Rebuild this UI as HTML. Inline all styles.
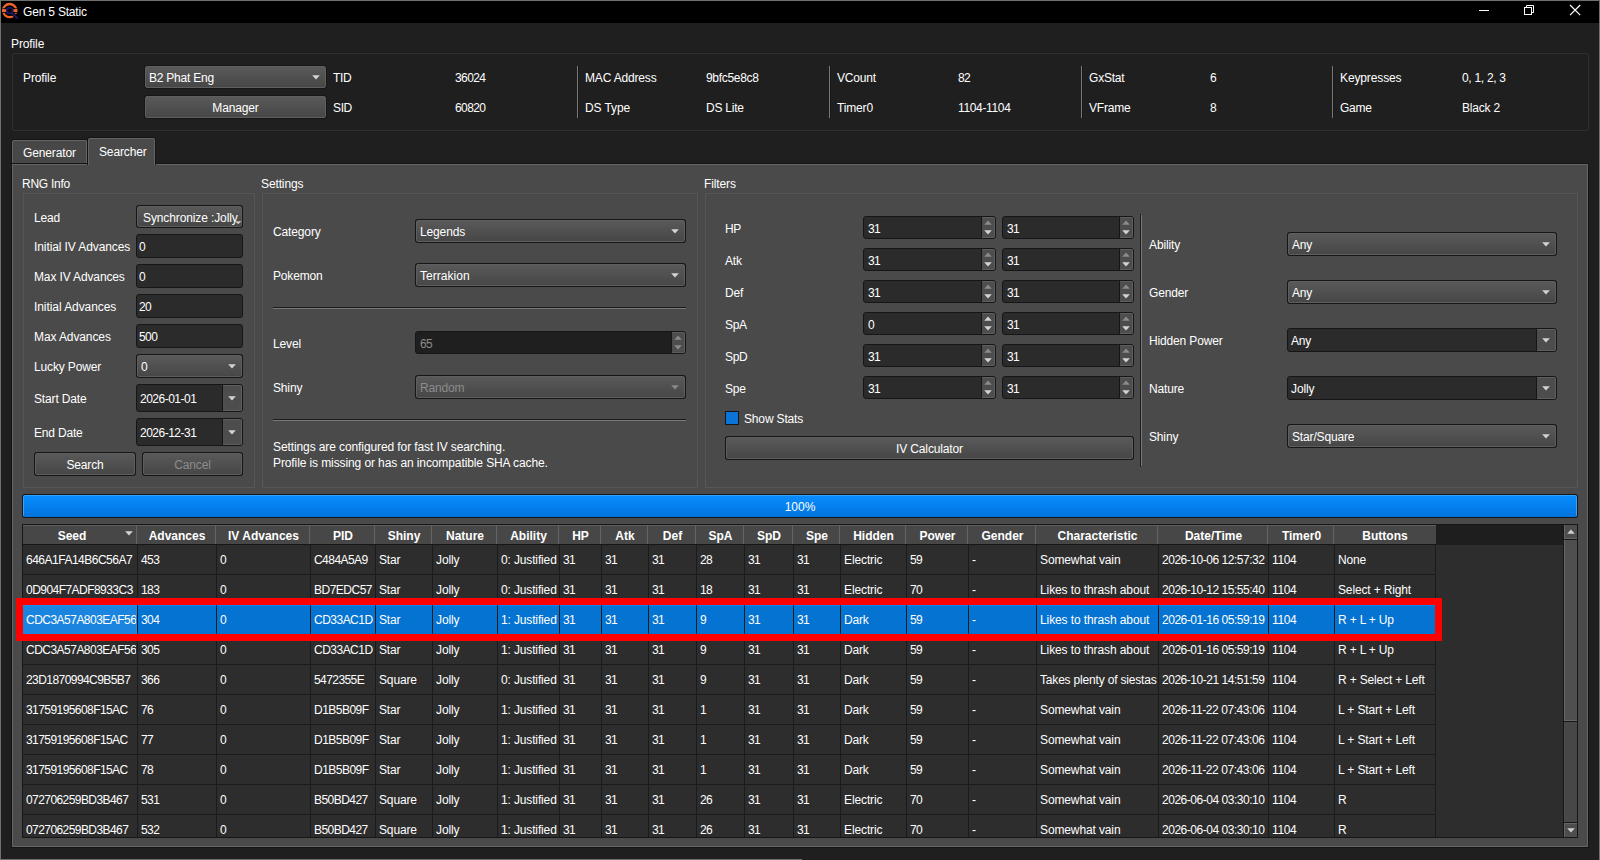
<!DOCTYPE html><html><head><meta charset="utf-8"><style>
html,body{margin:0;padding:0;width:1600px;height:860px;overflow:hidden;background:#1f1f1f}
.a{position:absolute} .t{position:absolute;font-family:"Liberation Sans", sans-serif;font-size:12px;line-height:13px;color:#fff;white-space:nowrap} .dis{color:#8c8c8c} .b{font-weight:bold}
</style></head><body>
<div class="a" style="left:0px;top:0px;width:1600px;height:860px;background:#6f6f6f"></div>
<div class="a" style="left:1px;top:1px;width:1598px;height:859px;background:#1f1f1f"></div>
<div class="a" style="left:1px;top:859px;width:801px;height:1px;background:#6f6f6f"></div>
<div class="a" style="left:1px;top:1px;width:1598px;height:22px;background:#000"></div>
<svg class="a" style="left:0px;top:0px" width="24" height="24" viewBox="0 0 24 24"><circle cx="9.65" cy="10.6" r="6.6" stroke="#f0622c" stroke-width="2.3" fill="none"/><rect x="1" y="8.4" width="5.6" height="0.8" fill="#000"/><rect x="12.7" y="8.4" width="5.6" height="0.8" fill="#000"/><rect x="1" y="12.0" width="5.6" height="0.8" fill="#000"/><rect x="12.7" y="12.0" width="5.6" height="0.8" fill="#000"/><rect x="2" y="9.2" width="4" height="2.8" fill="#f0622c"/><rect x="13.3" y="9.2" width="4" height="2.8" fill="#f0622c"/><path d="M11.8 12.8 L17.8 18.6" stroke="#000" stroke-width="3.4"/><circle cx="9.6" cy="10.6" r="2.9" stroke="#1e1a6b" stroke-width="1.5" fill="none"/><path d="M11.6 12.6 L17.3 18.1" stroke="#1e1a6b" stroke-width="2" stroke-linecap="round"/></svg>
<div class="t " style="left:23px;top:6px;letter-spacing:-0.189px;">Gen 5 Static</div>
<div class="a" style="left:1479px;top:10px;width:10px;height:1px;background:#fff"></div>
<svg class="a" style="left:1520px;top:4px" width="16" height="16" viewBox="0 0 16 16"><rect x="4.5" y="3.5" width="7" height="7" stroke="#fff" fill="none"/><path d="M6.5 3.5 V1.5 H13.5 V8.5 H11.5" stroke="#fff" fill="none"/></svg>
<svg class="a" style="left:1567px;top:2px" width="16" height="16" viewBox="0 0 16 16"><path d="M3 3 L13.2 13.2 M13.2 3 L3 13.2" stroke="#fff" stroke-width="1.2" fill="none"/></svg>
<div class="t " style="left:11px;top:38px;letter-spacing:-0.117px;">Profile</div>
<div class="a" style="left:12px;top:53px;width:1577px;height:78px;border:1px solid #2f2f2f;box-sizing:border-box;border-radius:2px"></div>
<div class="t " style="left:23px;top:72px;letter-spacing:-0.117px;">Profile</div>
<div class="a" style="left:144px;top:65px;width:183px;height:24px;background:#161616;border-radius:3px"></div>
<div class="a" style="left:145px;top:66px;width:181px;height:22px;background:linear-gradient(#595959,#474747);border:1px solid #5e5e5e;box-sizing:border-box;border-radius:2px"></div>
<svg class="a" style="left:311.5px;top:75px" width="8" height="5"><polygon points="0.2,0.3 7.8,0.3 4,4.6" fill="#d4d4d4"/></svg>
<div class="t " style="left:149px;top:72px;letter-spacing:-0.231px;">B2 Phat Eng</div>
<div class="a" style="left:144px;top:95px;width:183px;height:24px;background:#161616;border-radius:3px"></div>
<div class="a" style="left:145px;top:96px;width:181px;height:22px;background:linear-gradient(#595959,#474747);border:1px solid #5e5e5e;box-sizing:border-box;border-radius:2px"></div>
<div class="t " style="left:144px;width:183px;text-align:center;top:102px;letter-spacing:-0.157px;">Manager</div>
<div class="t " style="left:333px;top:72px;letter-spacing:-0.348px;">TID</div>
<div class="t " style="left:455px;top:72px;letter-spacing:-0.600px;">36024</div>
<div class="t " style="left:333px;top:102px;letter-spacing:-0.360px;">SID</div>
<div class="t " style="left:455px;top:102px;letter-spacing:-0.600px;">60820</div>
<div class="t " style="left:585px;top:72px;letter-spacing:-0.169px;">MAC Address</div>
<div class="t " style="left:706px;top:72px;letter-spacing:-0.315px;">9bfc5e8c8</div>
<div class="t " style="left:585px;top:102px;letter-spacing:-0.116px;">DS Type</div>
<div class="t " style="left:706px;top:102px;letter-spacing:-0.221px;">DS Lite</div>
<div class="a" style="left:577px;top:66px;width:1px;height:52px;background:#787878"></div>
<div class="a" style="left:578px;top:66px;width:1px;height:52px;background:#181818"></div>
<div class="t " style="left:837px;top:72px;letter-spacing:-0.208px;">VCount</div>
<div class="t " style="left:958px;top:72px;letter-spacing:-0.600px;">82</div>
<div class="t " style="left:837px;top:102px;letter-spacing:-0.151px;">Timer0</div>
<div class="t " style="left:958px;top:102px;letter-spacing:-0.349px;">1104-1104</div>
<div class="a" style="left:829px;top:66px;width:1px;height:52px;background:#787878"></div>
<div class="a" style="left:830px;top:66px;width:1px;height:52px;background:#181818"></div>
<div class="t " style="left:1089px;top:72px;letter-spacing:-0.204px;">GxStat</div>
<div class="t " style="left:1210px;top:72px;letter-spacing:-0.600px;">6</div>
<div class="t " style="left:1089px;top:102px;letter-spacing:-0.206px;">VFrame</div>
<div class="t " style="left:1210px;top:102px;letter-spacing:-0.600px;">8</div>
<div class="a" style="left:1081px;top:66px;width:1px;height:52px;background:#787878"></div>
<div class="a" style="left:1082px;top:66px;width:1px;height:52px;background:#181818"></div>
<div class="t " style="left:1340px;top:72px;letter-spacing:-0.125px;">Keypresses</div>
<div class="t " style="left:1462px;top:72px;letter-spacing:-0.300px;">0, 1, 2, 3</div>
<div class="t " style="left:1340px;top:102px;letter-spacing:-0.213px;">Game</div>
<div class="t " style="left:1462px;top:102px;letter-spacing:-0.207px;">Black 2</div>
<div class="a" style="left:1332px;top:66px;width:1px;height:52px;background:#787878"></div>
<div class="a" style="left:1333px;top:66px;width:1px;height:52px;background:#181818"></div>
<div class="a" style="left:11px;top:163px;width:1578px;height:685px;background:#141414"></div>
<div class="a" style="left:12px;top:164px;width:1576px;height:683px;background:#4a4a4a;border:1px solid #656565;box-sizing:border-box"></div>
<div class="a" style="left:11px;top:139px;width:77px;height:25px;background:#141414;border-radius:3px 3px 0 0"></div>
<div class="a" style="left:12px;top:140px;width:75px;height:23px;background:#474747;border-radius:2px 2px 0 0;border:1px solid #656565;border-bottom:none;box-sizing:border-box"></div>
<div class="t " style="left:23px;top:147px;letter-spacing:-0.130px;">Generator</div>
<div class="a" style="left:87px;top:137px;width:69px;height:28px;background:#141414;border-radius:3px 3px 0 0"></div>
<div class="a" style="left:88px;top:138px;width:67px;height:27px;background:#4a4a4a;border-radius:2px 2px 0 0;border:1px solid #656565;border-bottom:none;box-sizing:border-box"></div>
<div class="t " style="left:99px;top:146px;letter-spacing:-0.130px;">Searcher</div>
<div class="t " style="left:22px;top:178px;letter-spacing:-0.246px;">RNG Info</div>
<div class="a" style="left:23px;top:193px;width:232px;height:295px;border:1px solid #565656;box-sizing:border-box"></div>
<div class="t " style="left:261px;top:178px;letter-spacing:-0.120px;">Settings</div>
<div class="a" style="left:262px;top:193px;width:436px;height:295px;border:1px solid #565656;box-sizing:border-box"></div>
<div class="t " style="left:704px;top:178px;letter-spacing:-0.111px;">Filters</div>
<div class="a" style="left:705px;top:193px;width:873px;height:295px;border:1px solid #565656;box-sizing:border-box"></div>
<div class="t " style="left:34px;top:212px;letter-spacing:-0.165px;">Lead</div>
<div class="a" style="left:136px;top:205px;width:107px;height:23px;background:#161616;border-radius:3px"></div>
<div class="a" style="left:137px;top:206px;width:105px;height:21px;background:linear-gradient(#595959,#474747);border:1px solid #5e5e5e;box-sizing:border-box;border-radius:2px"></div>
<div class="t " style="left:143px;top:212px;letter-spacing:-0.116px;">Synchronize :Jolly</div>
<svg class="a" style="left:235px;top:221px" width="7" height="4"><polygon points="0,0.2 6.5,0.2 3.25,3.2" fill="#c8c8c8"/></svg>
<div class="t " style="left:34px;top:241px;letter-spacing:-0.095px;">Initial IV Advances</div>
<div class="a" style="left:136px;top:234px;width:107px;height:24px;background:#2b2b2b;border:1px solid #161616;box-sizing:border-box;border-radius:3px"></div>
<div class="t " style="left:139px;top:241px;letter-spacing:-0.600px;">0</div>
<div class="t " style="left:34px;top:271px;letter-spacing:-0.133px;">Max IV Advances</div>
<div class="a" style="left:136px;top:264px;width:107px;height:24px;background:#2b2b2b;border:1px solid #161616;box-sizing:border-box;border-radius:3px"></div>
<div class="t " style="left:139px;top:271px;letter-spacing:-0.600px;">0</div>
<div class="t " style="left:34px;top:301px;letter-spacing:-0.068px;">Initial Advances</div>
<div class="a" style="left:136px;top:294px;width:107px;height:24px;background:#2b2b2b;border:1px solid #161616;box-sizing:border-box;border-radius:3px"></div>
<div class="t " style="left:139px;top:301px;letter-spacing:-0.600px;">20</div>
<div class="t " style="left:34px;top:331px;letter-spacing:-0.106px;">Max Advances</div>
<div class="a" style="left:136px;top:324px;width:107px;height:24px;background:#2b2b2b;border:1px solid #161616;box-sizing:border-box;border-radius:3px"></div>
<div class="t " style="left:139px;top:331px;letter-spacing:-0.600px;">500</div>
<div class="t " style="left:34px;top:361px;letter-spacing:-0.150px;">Lucky Power</div>
<div class="a" style="left:136px;top:354px;width:107px;height:24px;background:#161616;border-radius:3px"></div>
<div class="a" style="left:137px;top:355px;width:105px;height:22px;background:linear-gradient(#595959,#474747);border:1px solid #5e5e5e;box-sizing:border-box;border-radius:2px"></div>
<svg class="a" style="left:227.5px;top:364px" width="8" height="5"><polygon points="0.2,0.3 7.8,0.3 4,4.6" fill="#d4d4d4"/></svg>
<div class="t " style="left:141px;top:361px;letter-spacing:-0.600px;">0</div>
<div class="t " style="left:34px;top:393px;letter-spacing:-0.151px;">Start Date</div>
<div class="a" style="left:136px;top:384px;width:107px;height:28px;background:#2b2b2b;border:1px solid #161616;box-sizing:border-box;border-radius:3px"></div>
<div class="a" style="left:222px;top:384px;width:1px;height:28px;background:#161616"></div>
<div class="a" style="left:223px;top:385px;width:19px;height:26px;background:#4d4d4d;border:1px solid #5e5e5e;border-left:none;box-sizing:border-box;border-radius:0 2px 2px 0"></div>
<svg class="a" style="left:227.5px;top:396px" width="8" height="5"><polygon points="0.2,0.3 7.8,0.3 4,4.6" fill="#d4d4d4"/></svg>
<div class="t " style="left:140px;top:393px;letter-spacing:-0.504px;">2026-01-01</div>
<div class="t " style="left:34px;top:427px;letter-spacing:-0.181px;">End Date</div>
<div class="a" style="left:136px;top:418px;width:107px;height:28px;background:#2b2b2b;border:1px solid #161616;box-sizing:border-box;border-radius:3px"></div>
<div class="a" style="left:222px;top:418px;width:1px;height:28px;background:#161616"></div>
<div class="a" style="left:223px;top:419px;width:19px;height:26px;background:#4d4d4d;border:1px solid #5e5e5e;border-left:none;box-sizing:border-box;border-radius:0 2px 2px 0"></div>
<svg class="a" style="left:227.5px;top:430px" width="8" height="5"><polygon points="0.2,0.3 7.8,0.3 4,4.6" fill="#d4d4d4"/></svg>
<div class="t " style="left:140px;top:427px;letter-spacing:-0.504px;">2026-12-31</div>
<div class="a" style="left:34px;top:452px;width:102px;height:24px;background:#161616;border-radius:3px"></div>
<div class="a" style="left:35px;top:453px;width:100px;height:22px;background:linear-gradient(#595959,#474747);border:1px solid #5e5e5e;box-sizing:border-box;border-radius:2px"></div>
<div class="t " style="left:34px;width:102px;text-align:center;top:459px;letter-spacing:-0.147px;">Search</div>
<div class="a" style="left:142px;top:452px;width:101px;height:24px;background:#161616;border-radius:3px"></div>
<div class="a" style="left:143px;top:453px;width:99px;height:22px;background:linear-gradient(#595959,#474747);border:1px solid #5e5e5e;box-sizing:border-box;border-radius:2px"></div>
<div class="t dis" style="left:142px;width:101px;text-align:center;top:459px;letter-spacing:-0.150px;">Cancel</div>
<div class="t " style="left:273px;top:226px;letter-spacing:-0.134px;">Category</div>
<div class="a" style="left:415px;top:219px;width:271px;height:24px;background:#161616;border-radius:3px"></div>
<div class="a" style="left:416px;top:220px;width:269px;height:22px;background:linear-gradient(#595959,#474747);border:1px solid #5e5e5e;box-sizing:border-box;border-radius:2px"></div>
<svg class="a" style="left:670.5px;top:229px" width="8" height="5"><polygon points="0.2,0.3 7.8,0.3 4,4.6" fill="#d4d4d4"/></svg>
<div class="t " style="left:420px;top:226px;letter-spacing:-0.136px;">Legends</div>
<div class="t " style="left:273px;top:270px;letter-spacing:-0.153px;">Pokemon</div>
<div class="a" style="left:415px;top:263px;width:271px;height:24px;background:#161616;border-radius:3px"></div>
<div class="a" style="left:416px;top:264px;width:269px;height:22px;background:linear-gradient(#595959,#474747);border:1px solid #5e5e5e;box-sizing:border-box;border-radius:2px"></div>
<svg class="a" style="left:670.5px;top:273px" width="8" height="5"><polygon points="0.2,0.3 7.8,0.3 4,4.6" fill="#d4d4d4"/></svg>
<div class="t " style="left:420px;top:270px;letter-spacing:0.031px;">Terrakion</div>
<div class="a" style="left:273px;top:307px;width:413px;height:1px;background:#1c1c1c"></div>
<div class="a" style="left:273px;top:308px;width:413px;height:1px;background:#787878"></div>
<div class="t " style="left:273px;top:338px;letter-spacing:-0.138px;">Level</div>
<div class="a" style="left:415px;top:331px;width:271px;height:23px;background:#1f1f1f;border:1px solid #161616;box-sizing:border-box;border-radius:3px"></div>
<div class="a" style="left:671px;top:331px;width:1px;height:23px;background:#161616"></div>
<div class="a" style="left:672px;top:332px;width:13px;height:21px;background:#4d4d4d;border:1px solid #5e5e5e;border-left:none;box-sizing:border-box;border-radius:0 2px 2px 0"></div>
<svg class="a" style="left:674px;top:335.4px" width="8" height="5"><polygon points="0.2,4.7 7.8,4.7 4,0.4" fill="#8a8a8a"/></svg>
<svg class="a" style="left:674px;top:344.6px" width="8" height="5"><polygon points="0.2,0.3 7.8,0.3 4,4.6" fill="#8a8a8a"/></svg>
<div class="t dis" style="left:420px;top:338px;letter-spacing:-0.600px;">65</div>
<div class="t " style="left:273px;top:382px;letter-spacing:-0.152px;">Shiny</div>
<div class="a" style="left:415px;top:375px;width:271px;height:24px;background:#161616;border-radius:3px"></div>
<div class="a" style="left:416px;top:376px;width:269px;height:22px;background:linear-gradient(#595959,#474747);border:1px solid #5e5e5e;box-sizing:border-box;border-radius:2px"></div>
<svg class="a" style="left:670.5px;top:385px" width="8" height="5"><polygon points="0.2,0.3 7.8,0.3 4,4.6" fill="#8a8a8a"/></svg>
<div class="t dis" style="left:420px;top:382px;letter-spacing:-0.170px;">Random</div>
<div class="a" style="left:273px;top:419px;width:413px;height:1px;background:#1c1c1c"></div>
<div class="a" style="left:273px;top:420px;width:413px;height:1px;background:#787878"></div>
<div class="t " style="left:273px;top:441px;letter-spacing:-0.101px;">Settings are configured for fast IV searching.</div>
<div class="t " style="left:273px;top:457px;letter-spacing:-0.102px;">Profile is missing or has an incompatible SHA cache.</div>
<div class="t " style="left:725px;top:223px;letter-spacing:-0.450px;">HP</div>
<div class="a" style="left:863px;top:216px;width:133px;height:23px;background:#2b2b2b;border:1px solid #161616;box-sizing:border-box;border-radius:3px"></div>
<div class="a" style="left:981px;top:216px;width:1px;height:23px;background:#161616"></div>
<div class="a" style="left:982px;top:217px;width:13px;height:21px;background:#4d4d4d;border:1px solid #5e5e5e;border-left:none;box-sizing:border-box;border-radius:0 2px 2px 0"></div>
<svg class="a" style="left:984px;top:220.4px" width="8" height="5"><polygon points="0.2,4.7 7.8,4.7 4,0.4" fill="#8a8a8a"/></svg>
<svg class="a" style="left:984px;top:229.6px" width="8" height="5"><polygon points="0.2,0.3 7.8,0.3 4,4.6" fill="#d4d4d4"/></svg>
<div class="t " style="left:868px;top:223px;letter-spacing:-0.600px;">31</div>
<div class="a" style="left:1002px;top:216px;width:132px;height:23px;background:#2b2b2b;border:1px solid #161616;box-sizing:border-box;border-radius:3px"></div>
<div class="a" style="left:1119px;top:216px;width:1px;height:23px;background:#161616"></div>
<div class="a" style="left:1120px;top:217px;width:13px;height:21px;background:#4d4d4d;border:1px solid #5e5e5e;border-left:none;box-sizing:border-box;border-radius:0 2px 2px 0"></div>
<svg class="a" style="left:1122px;top:220.4px" width="8" height="5"><polygon points="0.2,4.7 7.8,4.7 4,0.4" fill="#8a8a8a"/></svg>
<svg class="a" style="left:1122px;top:229.6px" width="8" height="5"><polygon points="0.2,0.3 7.8,0.3 4,4.6" fill="#d4d4d4"/></svg>
<div class="t " style="left:1007px;top:223px;letter-spacing:-0.600px;">31</div>
<div class="t " style="left:725px;top:255px;letter-spacing:-0.191px;">Atk</div>
<div class="a" style="left:863px;top:248px;width:133px;height:23px;background:#2b2b2b;border:1px solid #161616;box-sizing:border-box;border-radius:3px"></div>
<div class="a" style="left:981px;top:248px;width:1px;height:23px;background:#161616"></div>
<div class="a" style="left:982px;top:249px;width:13px;height:21px;background:#4d4d4d;border:1px solid #5e5e5e;border-left:none;box-sizing:border-box;border-radius:0 2px 2px 0"></div>
<svg class="a" style="left:984px;top:252.4px" width="8" height="5"><polygon points="0.2,4.7 7.8,4.7 4,0.4" fill="#8a8a8a"/></svg>
<svg class="a" style="left:984px;top:261.6px" width="8" height="5"><polygon points="0.2,0.3 7.8,0.3 4,4.6" fill="#d4d4d4"/></svg>
<div class="t " style="left:868px;top:255px;letter-spacing:-0.600px;">31</div>
<div class="a" style="left:1002px;top:248px;width:132px;height:23px;background:#2b2b2b;border:1px solid #161616;box-sizing:border-box;border-radius:3px"></div>
<div class="a" style="left:1119px;top:248px;width:1px;height:23px;background:#161616"></div>
<div class="a" style="left:1120px;top:249px;width:13px;height:21px;background:#4d4d4d;border:1px solid #5e5e5e;border-left:none;box-sizing:border-box;border-radius:0 2px 2px 0"></div>
<svg class="a" style="left:1122px;top:252.4px" width="8" height="5"><polygon points="0.2,4.7 7.8,4.7 4,0.4" fill="#8a8a8a"/></svg>
<svg class="a" style="left:1122px;top:261.6px" width="8" height="5"><polygon points="0.2,0.3 7.8,0.3 4,4.6" fill="#d4d4d4"/></svg>
<div class="t " style="left:1007px;top:255px;letter-spacing:-0.600px;">31</div>
<div class="t " style="left:725px;top:287px;letter-spacing:-0.206px;">Def</div>
<div class="a" style="left:863px;top:280px;width:133px;height:23px;background:#2b2b2b;border:1px solid #161616;box-sizing:border-box;border-radius:3px"></div>
<div class="a" style="left:981px;top:280px;width:1px;height:23px;background:#161616"></div>
<div class="a" style="left:982px;top:281px;width:13px;height:21px;background:#4d4d4d;border:1px solid #5e5e5e;border-left:none;box-sizing:border-box;border-radius:0 2px 2px 0"></div>
<svg class="a" style="left:984px;top:284.4px" width="8" height="5"><polygon points="0.2,4.7 7.8,4.7 4,0.4" fill="#8a8a8a"/></svg>
<svg class="a" style="left:984px;top:293.6px" width="8" height="5"><polygon points="0.2,0.3 7.8,0.3 4,4.6" fill="#d4d4d4"/></svg>
<div class="t " style="left:868px;top:287px;letter-spacing:-0.600px;">31</div>
<div class="a" style="left:1002px;top:280px;width:132px;height:23px;background:#2b2b2b;border:1px solid #161616;box-sizing:border-box;border-radius:3px"></div>
<div class="a" style="left:1119px;top:280px;width:1px;height:23px;background:#161616"></div>
<div class="a" style="left:1120px;top:281px;width:13px;height:21px;background:#4d4d4d;border:1px solid #5e5e5e;border-left:none;box-sizing:border-box;border-radius:0 2px 2px 0"></div>
<svg class="a" style="left:1122px;top:284.4px" width="8" height="5"><polygon points="0.2,4.7 7.8,4.7 4,0.4" fill="#8a8a8a"/></svg>
<svg class="a" style="left:1122px;top:293.6px" width="8" height="5"><polygon points="0.2,0.3 7.8,0.3 4,4.6" fill="#d4d4d4"/></svg>
<div class="t " style="left:1007px;top:287px;letter-spacing:-0.600px;">31</div>
<div class="t " style="left:725px;top:319px;letter-spacing:-0.321px;">SpA</div>
<div class="a" style="left:863px;top:312px;width:133px;height:23px;background:#2b2b2b;border:1px solid #161616;box-sizing:border-box;border-radius:3px"></div>
<div class="a" style="left:981px;top:312px;width:1px;height:23px;background:#161616"></div>
<div class="a" style="left:982px;top:313px;width:13px;height:21px;background:#4d4d4d;border:1px solid #5e5e5e;border-left:none;box-sizing:border-box;border-radius:0 2px 2px 0"></div>
<svg class="a" style="left:984px;top:316.4px" width="8" height="5"><polygon points="0.2,4.7 7.8,4.7 4,0.4" fill="#d4d4d4"/></svg>
<svg class="a" style="left:984px;top:325.6px" width="8" height="5"><polygon points="0.2,0.3 7.8,0.3 4,4.6" fill="#d4d4d4"/></svg>
<div class="t " style="left:868px;top:319px;letter-spacing:-0.600px;">0</div>
<div class="a" style="left:1002px;top:312px;width:132px;height:23px;background:#2b2b2b;border:1px solid #161616;box-sizing:border-box;border-radius:3px"></div>
<div class="a" style="left:1119px;top:312px;width:1px;height:23px;background:#161616"></div>
<div class="a" style="left:1120px;top:313px;width:13px;height:21px;background:#4d4d4d;border:1px solid #5e5e5e;border-left:none;box-sizing:border-box;border-radius:0 2px 2px 0"></div>
<svg class="a" style="left:1122px;top:316.4px" width="8" height="5"><polygon points="0.2,4.7 7.8,4.7 4,0.4" fill="#8a8a8a"/></svg>
<svg class="a" style="left:1122px;top:325.6px" width="8" height="5"><polygon points="0.2,0.3 7.8,0.3 4,4.6" fill="#d4d4d4"/></svg>
<div class="t " style="left:1007px;top:319px;letter-spacing:-0.600px;">31</div>
<div class="t " style="left:725px;top:351px;letter-spacing:-0.333px;">SpD</div>
<div class="a" style="left:863px;top:344px;width:133px;height:23px;background:#2b2b2b;border:1px solid #161616;box-sizing:border-box;border-radius:3px"></div>
<div class="a" style="left:981px;top:344px;width:1px;height:23px;background:#161616"></div>
<div class="a" style="left:982px;top:345px;width:13px;height:21px;background:#4d4d4d;border:1px solid #5e5e5e;border-left:none;box-sizing:border-box;border-radius:0 2px 2px 0"></div>
<svg class="a" style="left:984px;top:348.4px" width="8" height="5"><polygon points="0.2,4.7 7.8,4.7 4,0.4" fill="#8a8a8a"/></svg>
<svg class="a" style="left:984px;top:357.6px" width="8" height="5"><polygon points="0.2,0.3 7.8,0.3 4,4.6" fill="#d4d4d4"/></svg>
<div class="t " style="left:868px;top:351px;letter-spacing:-0.600px;">31</div>
<div class="a" style="left:1002px;top:344px;width:132px;height:23px;background:#2b2b2b;border:1px solid #161616;box-sizing:border-box;border-radius:3px"></div>
<div class="a" style="left:1119px;top:344px;width:1px;height:23px;background:#161616"></div>
<div class="a" style="left:1120px;top:345px;width:13px;height:21px;background:#4d4d4d;border:1px solid #5e5e5e;border-left:none;box-sizing:border-box;border-radius:0 2px 2px 0"></div>
<svg class="a" style="left:1122px;top:348.4px" width="8" height="5"><polygon points="0.2,4.7 7.8,4.7 4,0.4" fill="#8a8a8a"/></svg>
<svg class="a" style="left:1122px;top:357.6px" width="8" height="5"><polygon points="0.2,0.3 7.8,0.3 4,4.6" fill="#d4d4d4"/></svg>
<div class="t " style="left:1007px;top:351px;letter-spacing:-0.600px;">31</div>
<div class="t " style="left:725px;top:383px;letter-spacing:-0.211px;">Spe</div>
<div class="a" style="left:863px;top:376px;width:133px;height:23px;background:#2b2b2b;border:1px solid #161616;box-sizing:border-box;border-radius:3px"></div>
<div class="a" style="left:981px;top:376px;width:1px;height:23px;background:#161616"></div>
<div class="a" style="left:982px;top:377px;width:13px;height:21px;background:#4d4d4d;border:1px solid #5e5e5e;border-left:none;box-sizing:border-box;border-radius:0 2px 2px 0"></div>
<svg class="a" style="left:984px;top:380.4px" width="8" height="5"><polygon points="0.2,4.7 7.8,4.7 4,0.4" fill="#8a8a8a"/></svg>
<svg class="a" style="left:984px;top:389.6px" width="8" height="5"><polygon points="0.2,0.3 7.8,0.3 4,4.6" fill="#d4d4d4"/></svg>
<div class="t " style="left:868px;top:383px;letter-spacing:-0.600px;">31</div>
<div class="a" style="left:1002px;top:376px;width:132px;height:23px;background:#2b2b2b;border:1px solid #161616;box-sizing:border-box;border-radius:3px"></div>
<div class="a" style="left:1119px;top:376px;width:1px;height:23px;background:#161616"></div>
<div class="a" style="left:1120px;top:377px;width:13px;height:21px;background:#4d4d4d;border:1px solid #5e5e5e;border-left:none;box-sizing:border-box;border-radius:0 2px 2px 0"></div>
<svg class="a" style="left:1122px;top:380.4px" width="8" height="5"><polygon points="0.2,4.7 7.8,4.7 4,0.4" fill="#8a8a8a"/></svg>
<svg class="a" style="left:1122px;top:389.6px" width="8" height="5"><polygon points="0.2,0.3 7.8,0.3 4,4.6" fill="#d4d4d4"/></svg>
<div class="t " style="left:1007px;top:383px;letter-spacing:-0.600px;">31</div>
<div class="a" style="left:725px;top:411px;width:14px;height:14px;background:#0a74d8;border:1px solid #161616;box-sizing:border-box"></div>
<div class="t " style="left:744px;top:413px;letter-spacing:-0.158px;">Show Stats</div>
<div class="a" style="left:725px;top:436px;width:409px;height:24px;background:#161616;border-radius:3px"></div>
<div class="a" style="left:726px;top:437px;width:407px;height:22px;background:linear-gradient(#595959,#474747);border:1px solid #5e5e5e;box-sizing:border-box;border-radius:2px"></div>
<div class="t " style="left:725px;width:409px;text-align:center;top:443px;letter-spacing:-0.143px;">IV Calculator</div>
<div class="a" style="left:1140px;top:214px;width:1px;height:253px;background:#1c1c1c"></div>
<div class="a" style="left:1141px;top:215px;width:1px;height:251px;background:#787878"></div>
<div class="t " style="left:1149px;top:239px;letter-spacing:-0.113px;">Ability</div>
<div class="a" style="left:1287px;top:232px;width:270px;height:24px;background:#161616;border-radius:3px"></div>
<div class="a" style="left:1288px;top:233px;width:268px;height:22px;background:linear-gradient(#595959,#474747);border:1px solid #5e5e5e;box-sizing:border-box;border-radius:2px"></div>
<svg class="a" style="left:1541.5px;top:242px" width="8" height="5"><polygon points="0.2,0.3 7.8,0.3 4,4.6" fill="#d4d4d4"/></svg>
<div class="t " style="left:1292px;top:239px;letter-spacing:-0.207px;">Any</div>
<div class="t " style="left:1149px;top:287px;letter-spacing:-0.161px;">Gender</div>
<div class="a" style="left:1287px;top:280px;width:270px;height:24px;background:#161616;border-radius:3px"></div>
<div class="a" style="left:1288px;top:281px;width:268px;height:22px;background:linear-gradient(#595959,#474747);border:1px solid #5e5e5e;box-sizing:border-box;border-radius:2px"></div>
<svg class="a" style="left:1541.5px;top:290px" width="8" height="5"><polygon points="0.2,0.3 7.8,0.3 4,4.6" fill="#d4d4d4"/></svg>
<div class="t " style="left:1292px;top:287px;letter-spacing:-0.207px;">Any</div>
<div class="t " style="left:1149px;top:335px;letter-spacing:-0.153px;">Hidden Power</div>
<div class="a" style="left:1287px;top:328px;width:270px;height:24px;background:#2b2b2b;border:1px solid #161616;box-sizing:border-box;border-radius:3px"></div>
<div class="a" style="left:1536px;top:328px;width:1px;height:24px;background:#161616"></div>
<div class="a" style="left:1537px;top:329px;width:19px;height:22px;background:#4d4d4d;border:1px solid #5e5e5e;border-left:none;box-sizing:border-box;border-radius:0 2px 2px 0"></div>
<svg class="a" style="left:1541.5px;top:338px" width="8" height="5"><polygon points="0.2,0.3 7.8,0.3 4,4.6" fill="#d4d4d4"/></svg>
<div class="t " style="left:1291px;top:335px;letter-spacing:-0.207px;">Any</div>
<div class="t " style="left:1149px;top:383px;letter-spacing:-0.146px;">Nature</div>
<div class="a" style="left:1287px;top:376px;width:270px;height:24px;background:#2b2b2b;border:1px solid #161616;box-sizing:border-box;border-radius:3px"></div>
<div class="a" style="left:1536px;top:376px;width:1px;height:24px;background:#161616"></div>
<div class="a" style="left:1537px;top:377px;width:19px;height:22px;background:#4d4d4d;border:1px solid #5e5e5e;border-left:none;box-sizing:border-box;border-radius:0 2px 2px 0"></div>
<svg class="a" style="left:1541.5px;top:386px" width="8" height="5"><polygon points="0.2,0.3 7.8,0.3 4,4.6" fill="#d4d4d4"/></svg>
<div class="t " style="left:1291px;top:383px;letter-spacing:-0.119px;">Jolly</div>
<div class="t " style="left:1149px;top:431px;letter-spacing:-0.152px;">Shiny</div>
<div class="a" style="left:1287px;top:424px;width:270px;height:24px;background:#161616;border-radius:3px"></div>
<div class="a" style="left:1288px;top:425px;width:268px;height:22px;background:linear-gradient(#595959,#474747);border:1px solid #5e5e5e;box-sizing:border-box;border-radius:2px"></div>
<svg class="a" style="left:1541.5px;top:434px" width="8" height="5"><polygon points="0.2,0.3 7.8,0.3 4,4.6" fill="#d4d4d4"/></svg>
<div class="t " style="left:1292px;top:431px;letter-spacing:-0.149px;">Star/Square</div>
<div class="a" style="left:22px;top:494px;width:1556px;height:24px;background:#161616;border-radius:3px"></div>
<div class="a" style="left:23px;top:495px;width:1554px;height:22px;background:linear-gradient(#0a8cff,#0074dc);border-left:1px solid #38a4ff;border-right:1px solid #38a4ff;border-top:1px solid #30a2ff;box-sizing:border-box;border-radius:2px"></div>
<div class="t" style="left:23px;width:1554px;text-align:center;top:501px">100%</div>
<div class="a" style="left:22px;top:524px;width:1556px;height:314px;background:#161616"></div>
<div class="a" style="left:23px;top:525px;width:1541px;height:312px;background:#2d2d2d"></div>
<div class="a" style="left:23px;top:525px;width:1541px;height:20px;background:#1e1e1e"></div>
<div class="a" style="left:23px;top:544px;width:1413px;height:1px;background:#161616"></div>
<div class="a" style="left:23px;top:525px;width:115px;height:19px;background:#474747;border-top:1px solid #5d5d5d;box-sizing:border-box"></div>
<div class="a" style="left:136px;top:525px;width:1px;height:19px;background:#646464"></div>
<div class="t b" style="left:23px;width:98px;text-align:center;top:530px">Seed</div>
<div class="a" style="left:138px;top:525px;width:79px;height:19px;background:#474747;border-top:1px solid #5d5d5d;box-sizing:border-box"></div>
<div class="a" style="left:215px;top:525px;width:1px;height:19px;background:#646464"></div>
<div class="t b" style="left:138px;width:78px;text-align:center;top:530px">Advances</div>
<div class="a" style="left:217px;top:525px;width:94px;height:19px;background:#474747;border-top:1px solid #5d5d5d;box-sizing:border-box"></div>
<div class="a" style="left:309px;top:525px;width:1px;height:19px;background:#646464"></div>
<div class="t b" style="left:217px;width:93px;text-align:center;top:530px">IV Advances</div>
<div class="a" style="left:311px;top:525px;width:65px;height:19px;background:#474747;border-top:1px solid #5d5d5d;box-sizing:border-box"></div>
<div class="a" style="left:374px;top:525px;width:1px;height:19px;background:#646464"></div>
<div class="t b" style="left:311px;width:64px;text-align:center;top:530px">PID</div>
<div class="a" style="left:376px;top:525px;width:57px;height:19px;background:#474747;border-top:1px solid #5d5d5d;box-sizing:border-box"></div>
<div class="a" style="left:431px;top:525px;width:1px;height:19px;background:#646464"></div>
<div class="t b" style="left:376px;width:56px;text-align:center;top:530px">Shiny</div>
<div class="a" style="left:433px;top:525px;width:65px;height:19px;background:#474747;border-top:1px solid #5d5d5d;box-sizing:border-box"></div>
<div class="a" style="left:496px;top:525px;width:1px;height:19px;background:#646464"></div>
<div class="t b" style="left:433px;width:64px;text-align:center;top:530px">Nature</div>
<div class="a" style="left:498px;top:525px;width:62px;height:19px;background:#474747;border-top:1px solid #5d5d5d;box-sizing:border-box"></div>
<div class="a" style="left:558px;top:525px;width:1px;height:19px;background:#646464"></div>
<div class="t b" style="left:498px;width:61px;text-align:center;top:530px">Ability</div>
<div class="a" style="left:560px;top:525px;width:42px;height:19px;background:#474747;border-top:1px solid #5d5d5d;box-sizing:border-box"></div>
<div class="a" style="left:600px;top:525px;width:1px;height:19px;background:#646464"></div>
<div class="t b" style="left:560px;width:41px;text-align:center;top:530px">HP</div>
<div class="a" style="left:602px;top:525px;width:47px;height:19px;background:#474747;border-top:1px solid #5d5d5d;box-sizing:border-box"></div>
<div class="a" style="left:647px;top:525px;width:1px;height:19px;background:#646464"></div>
<div class="t b" style="left:602px;width:46px;text-align:center;top:530px">Atk</div>
<div class="a" style="left:649px;top:525px;width:48px;height:19px;background:#474747;border-top:1px solid #5d5d5d;box-sizing:border-box"></div>
<div class="a" style="left:695px;top:525px;width:1px;height:19px;background:#646464"></div>
<div class="t b" style="left:649px;width:47px;text-align:center;top:530px">Def</div>
<div class="a" style="left:697px;top:525px;width:48px;height:19px;background:#474747;border-top:1px solid #5d5d5d;box-sizing:border-box"></div>
<div class="a" style="left:743px;top:525px;width:1px;height:19px;background:#646464"></div>
<div class="t b" style="left:697px;width:47px;text-align:center;top:530px">SpA</div>
<div class="a" style="left:745px;top:525px;width:49px;height:19px;background:#474747;border-top:1px solid #5d5d5d;box-sizing:border-box"></div>
<div class="a" style="left:792px;top:525px;width:1px;height:19px;background:#646464"></div>
<div class="t b" style="left:745px;width:48px;text-align:center;top:530px">SpD</div>
<div class="a" style="left:794px;top:525px;width:47px;height:19px;background:#474747;border-top:1px solid #5d5d5d;box-sizing:border-box"></div>
<div class="a" style="left:839px;top:525px;width:1px;height:19px;background:#646464"></div>
<div class="t b" style="left:794px;width:46px;text-align:center;top:530px">Spe</div>
<div class="a" style="left:841px;top:525px;width:66px;height:19px;background:#474747;border-top:1px solid #5d5d5d;box-sizing:border-box"></div>
<div class="a" style="left:905px;top:525px;width:1px;height:19px;background:#646464"></div>
<div class="t b" style="left:841px;width:65px;text-align:center;top:530px">Hidden</div>
<div class="a" style="left:907px;top:525px;width:62px;height:19px;background:#474747;border-top:1px solid #5d5d5d;box-sizing:border-box"></div>
<div class="a" style="left:967px;top:525px;width:1px;height:19px;background:#646464"></div>
<div class="t b" style="left:907px;width:61px;text-align:center;top:530px">Power</div>
<div class="a" style="left:969px;top:525px;width:68px;height:19px;background:#474747;border-top:1px solid #5d5d5d;box-sizing:border-box"></div>
<div class="a" style="left:1035px;top:525px;width:1px;height:19px;background:#646464"></div>
<div class="t b" style="left:969px;width:67px;text-align:center;top:530px">Gender</div>
<div class="a" style="left:1037px;top:525px;width:122px;height:19px;background:#474747;border-top:1px solid #5d5d5d;box-sizing:border-box"></div>
<div class="a" style="left:1157px;top:525px;width:1px;height:19px;background:#646464"></div>
<div class="t b" style="left:1037px;width:121px;text-align:center;top:530px">Characteristic</div>
<div class="a" style="left:1159px;top:525px;width:110px;height:19px;background:#474747;border-top:1px solid #5d5d5d;box-sizing:border-box"></div>
<div class="a" style="left:1267px;top:525px;width:1px;height:19px;background:#646464"></div>
<div class="t b" style="left:1159px;width:109px;text-align:center;top:530px">Date/Time</div>
<div class="a" style="left:1269px;top:525px;width:66px;height:19px;background:#474747;border-top:1px solid #5d5d5d;box-sizing:border-box"></div>
<div class="a" style="left:1333px;top:525px;width:1px;height:19px;background:#646464"></div>
<div class="t b" style="left:1269px;width:65px;text-align:center;top:530px">Timer0</div>
<div class="a" style="left:1335px;top:525px;width:101px;height:19px;background:#474747;border-top:1px solid #5d5d5d;box-sizing:border-box"></div>
<div class="t b" style="left:1335px;width:100px;text-align:center;top:530px">Buttons</div>
<svg class="a" style="left:125px;top:531px" width="8" height="5"><polygon points="0.2,0.3 7.8,0.3 4,4.6" fill="#d4d4d4"/></svg>
<div class="a" style="left:23px;top:545px;width:1540px;height:292px;overflow:hidden">
<div class="t" style="left:3px;top:9px;width:110px;overflow:hidden;letter-spacing:-0.496px;">646A1FA14B6C56A7</div>
<div class="t" style="left:118px;top:9px;width:74px;overflow:hidden;letter-spacing:-0.600px;">453</div>
<div class="t" style="left:197px;top:9px;width:89px;overflow:hidden;letter-spacing:-0.600px;">0</div>
<div class="t" style="left:291px;top:9px;width:60px;overflow:hidden;letter-spacing:-0.542px;">C484A5A9</div>
<div class="t" style="left:356px;top:9px;width:52px;overflow:hidden;letter-spacing:-0.160px;">Star</div>
<div class="t" style="left:413px;top:9px;width:60px;overflow:hidden;letter-spacing:-0.119px;">Jolly</div>
<div class="t" style="left:478px;top:9px;width:57px;overflow:hidden;letter-spacing:-0.141px;">0: Justified</div>
<div class="t" style="left:540px;top:9px;width:37px;overflow:hidden;letter-spacing:-0.600px;">31</div>
<div class="t" style="left:582px;top:9px;width:42px;overflow:hidden;letter-spacing:-0.600px;">31</div>
<div class="t" style="left:629px;top:9px;width:43px;overflow:hidden;letter-spacing:-0.600px;">31</div>
<div class="t" style="left:677px;top:9px;width:43px;overflow:hidden;letter-spacing:-0.600px;">28</div>
<div class="t" style="left:725px;top:9px;width:44px;overflow:hidden;letter-spacing:-0.600px;">31</div>
<div class="t" style="left:774px;top:9px;width:42px;overflow:hidden;letter-spacing:-0.600px;">31</div>
<div class="t" style="left:821px;top:9px;width:61px;overflow:hidden;letter-spacing:-0.113px;">Electric</div>
<div class="t" style="left:887px;top:9px;width:57px;overflow:hidden;letter-spacing:-0.600px;">59</div>
<div class="t" style="left:949px;top:9px;width:63px;overflow:hidden;letter-spacing:-0.120px;">-</div>
<div class="t" style="left:1017px;top:9px;width:117px;overflow:hidden;letter-spacing:-0.122px;">Somewhat vain</div>
<div class="t" style="left:1139px;top:9px;width:105px;overflow:hidden;letter-spacing:-0.471px;">2026-10-06 12:57:32</div>
<div class="t" style="left:1249px;top:9px;width:61px;overflow:hidden;letter-spacing:-0.378px;">1104</div>
<div class="t" style="left:1315px;top:9px;width:96px;overflow:hidden;letter-spacing:-0.192px;">None</div>
<div class="a" style="left:0px;top:29px;width:1413px;height:1px;background:#1b1b1b"></div>
<div class="t" style="left:3px;top:39px;width:110px;overflow:hidden;letter-spacing:-0.540px;">0D904F7ADF8933C3</div>
<div class="t" style="left:118px;top:39px;width:74px;overflow:hidden;letter-spacing:-0.600px;">183</div>
<div class="t" style="left:197px;top:39px;width:89px;overflow:hidden;letter-spacing:-0.600px;">0</div>
<div class="t" style="left:291px;top:39px;width:60px;overflow:hidden;letter-spacing:-0.509px;">BD7EDC57</div>
<div class="t" style="left:356px;top:39px;width:52px;overflow:hidden;letter-spacing:-0.160px;">Star</div>
<div class="t" style="left:413px;top:39px;width:60px;overflow:hidden;letter-spacing:-0.119px;">Jolly</div>
<div class="t" style="left:478px;top:39px;width:57px;overflow:hidden;letter-spacing:-0.141px;">0: Justified</div>
<div class="t" style="left:540px;top:39px;width:37px;overflow:hidden;letter-spacing:-0.600px;">31</div>
<div class="t" style="left:582px;top:39px;width:42px;overflow:hidden;letter-spacing:-0.600px;">31</div>
<div class="t" style="left:629px;top:39px;width:43px;overflow:hidden;letter-spacing:-0.600px;">31</div>
<div class="t" style="left:677px;top:39px;width:43px;overflow:hidden;letter-spacing:-0.600px;">18</div>
<div class="t" style="left:725px;top:39px;width:44px;overflow:hidden;letter-spacing:-0.600px;">31</div>
<div class="t" style="left:774px;top:39px;width:42px;overflow:hidden;letter-spacing:-0.600px;">31</div>
<div class="t" style="left:821px;top:39px;width:61px;overflow:hidden;letter-spacing:-0.113px;">Electric</div>
<div class="t" style="left:887px;top:39px;width:57px;overflow:hidden;letter-spacing:-0.600px;">70</div>
<div class="t" style="left:949px;top:39px;width:63px;overflow:hidden;letter-spacing:-0.120px;">-</div>
<div class="t" style="left:1017px;top:39px;width:117px;overflow:hidden;letter-spacing:-0.099px;">Likes to thrash about</div>
<div class="t" style="left:1139px;top:39px;width:105px;overflow:hidden;letter-spacing:-0.471px;">2026-10-12 15:55:40</div>
<div class="t" style="left:1249px;top:39px;width:61px;overflow:hidden;letter-spacing:-0.378px;">1104</div>
<div class="t" style="left:1315px;top:39px;width:96px;overflow:hidden;letter-spacing:-0.141px;">Select + Right</div>
<div class="a" style="left:0px;top:59px;width:1413px;height:1px;background:#1b1b1b"></div>
<div class="a" style="left:0px;top:60px;width:114px;height:29px;background:#1a84de;border-top:1px solid #1a90f0;border-right:1px solid #1e8cea;box-sizing:border-box"></div>
<div class="t" style="left:3px;top:69px;width:110px;overflow:hidden;letter-spacing:-0.521px;">CDC3A57A803EAF56</div>
<div class="a" style="left:115px;top:60px;width:78px;height:29px;background:#0473d2;border-top:1px solid #0a86f0;box-sizing:border-box"></div>
<div class="t" style="left:118px;top:69px;width:74px;overflow:hidden;letter-spacing:-0.600px;">304</div>
<div class="a" style="left:194px;top:60px;width:93px;height:29px;background:#0473d2;border-top:1px solid #0a86f0;box-sizing:border-box"></div>
<div class="t" style="left:197px;top:69px;width:89px;overflow:hidden;letter-spacing:-0.600px;">0</div>
<div class="a" style="left:288px;top:60px;width:64px;height:29px;background:#0473d2;border-top:1px solid #0a86f0;box-sizing:border-box"></div>
<div class="t" style="left:291px;top:69px;width:60px;overflow:hidden;letter-spacing:-0.513px;">CD33AC1D</div>
<div class="a" style="left:353px;top:60px;width:56px;height:29px;background:#0473d2;border-top:1px solid #0a86f0;box-sizing:border-box"></div>
<div class="t" style="left:356px;top:69px;width:52px;overflow:hidden;letter-spacing:-0.160px;">Star</div>
<div class="a" style="left:410px;top:60px;width:64px;height:29px;background:#0473d2;border-top:1px solid #0a86f0;box-sizing:border-box"></div>
<div class="t" style="left:413px;top:69px;width:60px;overflow:hidden;letter-spacing:-0.119px;">Jolly</div>
<div class="a" style="left:475px;top:60px;width:61px;height:29px;background:#0473d2;border-top:1px solid #0a86f0;box-sizing:border-box"></div>
<div class="t" style="left:478px;top:69px;width:57px;overflow:hidden;letter-spacing:-0.141px;">1: Justified</div>
<div class="a" style="left:537px;top:60px;width:41px;height:29px;background:#0473d2;border-top:1px solid #0a86f0;box-sizing:border-box"></div>
<div class="t" style="left:540px;top:69px;width:37px;overflow:hidden;letter-spacing:-0.600px;">31</div>
<div class="a" style="left:579px;top:60px;width:46px;height:29px;background:#0473d2;border-top:1px solid #0a86f0;box-sizing:border-box"></div>
<div class="t" style="left:582px;top:69px;width:42px;overflow:hidden;letter-spacing:-0.600px;">31</div>
<div class="a" style="left:626px;top:60px;width:47px;height:29px;background:#0473d2;border-top:1px solid #0a86f0;box-sizing:border-box"></div>
<div class="t" style="left:629px;top:69px;width:43px;overflow:hidden;letter-spacing:-0.600px;">31</div>
<div class="a" style="left:674px;top:60px;width:47px;height:29px;background:#0473d2;border-top:1px solid #0a86f0;box-sizing:border-box"></div>
<div class="t" style="left:677px;top:69px;width:43px;overflow:hidden;letter-spacing:-0.600px;">9</div>
<div class="a" style="left:722px;top:60px;width:48px;height:29px;background:#0473d2;border-top:1px solid #0a86f0;box-sizing:border-box"></div>
<div class="t" style="left:725px;top:69px;width:44px;overflow:hidden;letter-spacing:-0.600px;">31</div>
<div class="a" style="left:771px;top:60px;width:46px;height:29px;background:#0473d2;border-top:1px solid #0a86f0;box-sizing:border-box"></div>
<div class="t" style="left:774px;top:69px;width:42px;overflow:hidden;letter-spacing:-0.600px;">31</div>
<div class="a" style="left:818px;top:60px;width:65px;height:29px;background:#0473d2;border-top:1px solid #0a86f0;box-sizing:border-box"></div>
<div class="t" style="left:821px;top:69px;width:61px;overflow:hidden;letter-spacing:-0.180px;">Dark</div>
<div class="a" style="left:884px;top:60px;width:61px;height:29px;background:#0473d2;border-top:1px solid #0a86f0;box-sizing:border-box"></div>
<div class="t" style="left:887px;top:69px;width:57px;overflow:hidden;letter-spacing:-0.600px;">59</div>
<div class="a" style="left:946px;top:60px;width:67px;height:29px;background:#0473d2;border-top:1px solid #0a86f0;box-sizing:border-box"></div>
<div class="t" style="left:949px;top:69px;width:63px;overflow:hidden;letter-spacing:-0.120px;">-</div>
<div class="a" style="left:1014px;top:60px;width:121px;height:29px;background:#0473d2;border-top:1px solid #0a86f0;box-sizing:border-box"></div>
<div class="t" style="left:1017px;top:69px;width:117px;overflow:hidden;letter-spacing:-0.099px;">Likes to thrash about</div>
<div class="a" style="left:1136px;top:60px;width:109px;height:29px;background:#0473d2;border-top:1px solid #0a86f0;box-sizing:border-box"></div>
<div class="t" style="left:1139px;top:69px;width:105px;overflow:hidden;letter-spacing:-0.471px;">2026-01-16 05:59:19</div>
<div class="a" style="left:1246px;top:60px;width:65px;height:29px;background:#0473d2;border-top:1px solid #0a86f0;box-sizing:border-box"></div>
<div class="t" style="left:1249px;top:69px;width:61px;overflow:hidden;letter-spacing:-0.378px;">1104</div>
<div class="a" style="left:1312px;top:60px;width:100px;height:29px;background:#0473d2;border-top:1px solid #0a86f0;box-sizing:border-box"></div>
<div class="t" style="left:1315px;top:69px;width:96px;overflow:hidden;letter-spacing:-0.178px;">R + L + Up</div>
<div class="a" style="left:0px;top:89px;width:1413px;height:1px;background:#1b1b1b"></div>
<div class="t" style="left:3px;top:99px;width:110px;overflow:hidden;letter-spacing:-0.521px;">CDC3A57A803EAF56</div>
<div class="t" style="left:118px;top:99px;width:74px;overflow:hidden;letter-spacing:-0.600px;">305</div>
<div class="t" style="left:197px;top:99px;width:89px;overflow:hidden;letter-spacing:-0.600px;">0</div>
<div class="t" style="left:291px;top:99px;width:60px;overflow:hidden;letter-spacing:-0.513px;">CD33AC1D</div>
<div class="t" style="left:356px;top:99px;width:52px;overflow:hidden;letter-spacing:-0.160px;">Star</div>
<div class="t" style="left:413px;top:99px;width:60px;overflow:hidden;letter-spacing:-0.119px;">Jolly</div>
<div class="t" style="left:478px;top:99px;width:57px;overflow:hidden;letter-spacing:-0.141px;">1: Justified</div>
<div class="t" style="left:540px;top:99px;width:37px;overflow:hidden;letter-spacing:-0.600px;">31</div>
<div class="t" style="left:582px;top:99px;width:42px;overflow:hidden;letter-spacing:-0.600px;">31</div>
<div class="t" style="left:629px;top:99px;width:43px;overflow:hidden;letter-spacing:-0.600px;">31</div>
<div class="t" style="left:677px;top:99px;width:43px;overflow:hidden;letter-spacing:-0.600px;">9</div>
<div class="t" style="left:725px;top:99px;width:44px;overflow:hidden;letter-spacing:-0.600px;">31</div>
<div class="t" style="left:774px;top:99px;width:42px;overflow:hidden;letter-spacing:-0.600px;">31</div>
<div class="t" style="left:821px;top:99px;width:61px;overflow:hidden;letter-spacing:-0.180px;">Dark</div>
<div class="t" style="left:887px;top:99px;width:57px;overflow:hidden;letter-spacing:-0.600px;">59</div>
<div class="t" style="left:949px;top:99px;width:63px;overflow:hidden;letter-spacing:-0.120px;">-</div>
<div class="t" style="left:1017px;top:99px;width:117px;overflow:hidden;letter-spacing:-0.099px;">Likes to thrash about</div>
<div class="t" style="left:1139px;top:99px;width:105px;overflow:hidden;letter-spacing:-0.471px;">2026-01-16 05:59:19</div>
<div class="t" style="left:1249px;top:99px;width:61px;overflow:hidden;letter-spacing:-0.378px;">1104</div>
<div class="t" style="left:1315px;top:99px;width:96px;overflow:hidden;letter-spacing:-0.178px;">R + L + Up</div>
<div class="a" style="left:0px;top:119px;width:1413px;height:1px;background:#1b1b1b"></div>
<div class="t" style="left:3px;top:129px;width:110px;overflow:hidden;letter-spacing:-0.563px;">23D1870994C9B5B7</div>
<div class="t" style="left:118px;top:129px;width:74px;overflow:hidden;letter-spacing:-0.600px;">366</div>
<div class="t" style="left:197px;top:129px;width:89px;overflow:hidden;letter-spacing:-0.600px;">0</div>
<div class="t" style="left:291px;top:129px;width:60px;overflow:hidden;letter-spacing:-0.579px;">5472355E</div>
<div class="t" style="left:356px;top:129px;width:52px;overflow:hidden;letter-spacing:-0.149px;">Square</div>
<div class="t" style="left:413px;top:129px;width:60px;overflow:hidden;letter-spacing:-0.119px;">Jolly</div>
<div class="t" style="left:478px;top:129px;width:57px;overflow:hidden;letter-spacing:-0.141px;">0: Justified</div>
<div class="t" style="left:540px;top:129px;width:37px;overflow:hidden;letter-spacing:-0.600px;">31</div>
<div class="t" style="left:582px;top:129px;width:42px;overflow:hidden;letter-spacing:-0.600px;">31</div>
<div class="t" style="left:629px;top:129px;width:43px;overflow:hidden;letter-spacing:-0.600px;">31</div>
<div class="t" style="left:677px;top:129px;width:43px;overflow:hidden;letter-spacing:-0.600px;">9</div>
<div class="t" style="left:725px;top:129px;width:44px;overflow:hidden;letter-spacing:-0.600px;">31</div>
<div class="t" style="left:774px;top:129px;width:42px;overflow:hidden;letter-spacing:-0.600px;">31</div>
<div class="t" style="left:821px;top:129px;width:61px;overflow:hidden;letter-spacing:-0.180px;">Dark</div>
<div class="t" style="left:887px;top:129px;width:57px;overflow:hidden;letter-spacing:-0.600px;">59</div>
<div class="t" style="left:949px;top:129px;width:63px;overflow:hidden;letter-spacing:-0.120px;">-</div>
<div class="t" style="left:1017px;top:129px;width:117px;overflow:hidden;letter-spacing:-0.182px;">Takes plenty of siestas</div>
<div class="t" style="left:1139px;top:129px;width:105px;overflow:hidden;letter-spacing:-0.471px;">2026-10-21 14:51:59</div>
<div class="t" style="left:1249px;top:129px;width:61px;overflow:hidden;letter-spacing:-0.378px;">1104</div>
<div class="t" style="left:1315px;top:129px;width:96px;overflow:hidden;letter-spacing:-0.157px;">R + Select + Left</div>
<div class="a" style="left:0px;top:149px;width:1413px;height:1px;background:#1b1b1b"></div>
<div class="t" style="left:3px;top:159px;width:110px;overflow:hidden;letter-spacing:-0.569px;">31759195608F15AC</div>
<div class="t" style="left:118px;top:159px;width:74px;overflow:hidden;letter-spacing:-0.600px;">76</div>
<div class="t" style="left:197px;top:159px;width:89px;overflow:hidden;letter-spacing:-0.600px;">0</div>
<div class="t" style="left:291px;top:159px;width:60px;overflow:hidden;letter-spacing:-0.516px;">D1B5B09F</div>
<div class="t" style="left:356px;top:159px;width:52px;overflow:hidden;letter-spacing:-0.160px;">Star</div>
<div class="t" style="left:413px;top:159px;width:60px;overflow:hidden;letter-spacing:-0.119px;">Jolly</div>
<div class="t" style="left:478px;top:159px;width:57px;overflow:hidden;letter-spacing:-0.141px;">1: Justified</div>
<div class="t" style="left:540px;top:159px;width:37px;overflow:hidden;letter-spacing:-0.600px;">31</div>
<div class="t" style="left:582px;top:159px;width:42px;overflow:hidden;letter-spacing:-0.600px;">31</div>
<div class="t" style="left:629px;top:159px;width:43px;overflow:hidden;letter-spacing:-0.600px;">31</div>
<div class="t" style="left:677px;top:159px;width:43px;overflow:hidden;letter-spacing:-0.600px;">1</div>
<div class="t" style="left:725px;top:159px;width:44px;overflow:hidden;letter-spacing:-0.600px;">31</div>
<div class="t" style="left:774px;top:159px;width:42px;overflow:hidden;letter-spacing:-0.600px;">31</div>
<div class="t" style="left:821px;top:159px;width:61px;overflow:hidden;letter-spacing:-0.180px;">Dark</div>
<div class="t" style="left:887px;top:159px;width:57px;overflow:hidden;letter-spacing:-0.600px;">59</div>
<div class="t" style="left:949px;top:159px;width:63px;overflow:hidden;letter-spacing:-0.120px;">-</div>
<div class="t" style="left:1017px;top:159px;width:117px;overflow:hidden;letter-spacing:-0.122px;">Somewhat vain</div>
<div class="t" style="left:1139px;top:159px;width:105px;overflow:hidden;letter-spacing:-0.424px;">2026-11-22 07:43:06</div>
<div class="t" style="left:1249px;top:159px;width:61px;overflow:hidden;letter-spacing:-0.378px;">1104</div>
<div class="t" style="left:1315px;top:159px;width:96px;overflow:hidden;letter-spacing:-0.125px;">L + Start + Left</div>
<div class="a" style="left:0px;top:179px;width:1413px;height:1px;background:#1b1b1b"></div>
<div class="t" style="left:3px;top:189px;width:110px;overflow:hidden;letter-spacing:-0.569px;">31759195608F15AC</div>
<div class="t" style="left:118px;top:189px;width:74px;overflow:hidden;letter-spacing:-0.600px;">77</div>
<div class="t" style="left:197px;top:189px;width:89px;overflow:hidden;letter-spacing:-0.600px;">0</div>
<div class="t" style="left:291px;top:189px;width:60px;overflow:hidden;letter-spacing:-0.516px;">D1B5B09F</div>
<div class="t" style="left:356px;top:189px;width:52px;overflow:hidden;letter-spacing:-0.160px;">Star</div>
<div class="t" style="left:413px;top:189px;width:60px;overflow:hidden;letter-spacing:-0.119px;">Jolly</div>
<div class="t" style="left:478px;top:189px;width:57px;overflow:hidden;letter-spacing:-0.141px;">1: Justified</div>
<div class="t" style="left:540px;top:189px;width:37px;overflow:hidden;letter-spacing:-0.600px;">31</div>
<div class="t" style="left:582px;top:189px;width:42px;overflow:hidden;letter-spacing:-0.600px;">31</div>
<div class="t" style="left:629px;top:189px;width:43px;overflow:hidden;letter-spacing:-0.600px;">31</div>
<div class="t" style="left:677px;top:189px;width:43px;overflow:hidden;letter-spacing:-0.600px;">1</div>
<div class="t" style="left:725px;top:189px;width:44px;overflow:hidden;letter-spacing:-0.600px;">31</div>
<div class="t" style="left:774px;top:189px;width:42px;overflow:hidden;letter-spacing:-0.600px;">31</div>
<div class="t" style="left:821px;top:189px;width:61px;overflow:hidden;letter-spacing:-0.180px;">Dark</div>
<div class="t" style="left:887px;top:189px;width:57px;overflow:hidden;letter-spacing:-0.600px;">59</div>
<div class="t" style="left:949px;top:189px;width:63px;overflow:hidden;letter-spacing:-0.120px;">-</div>
<div class="t" style="left:1017px;top:189px;width:117px;overflow:hidden;letter-spacing:-0.122px;">Somewhat vain</div>
<div class="t" style="left:1139px;top:189px;width:105px;overflow:hidden;letter-spacing:-0.424px;">2026-11-22 07:43:06</div>
<div class="t" style="left:1249px;top:189px;width:61px;overflow:hidden;letter-spacing:-0.378px;">1104</div>
<div class="t" style="left:1315px;top:189px;width:96px;overflow:hidden;letter-spacing:-0.125px;">L + Start + Left</div>
<div class="a" style="left:0px;top:209px;width:1413px;height:1px;background:#1b1b1b"></div>
<div class="t" style="left:3px;top:219px;width:110px;overflow:hidden;letter-spacing:-0.569px;">31759195608F15AC</div>
<div class="t" style="left:118px;top:219px;width:74px;overflow:hidden;letter-spacing:-0.600px;">78</div>
<div class="t" style="left:197px;top:219px;width:89px;overflow:hidden;letter-spacing:-0.600px;">0</div>
<div class="t" style="left:291px;top:219px;width:60px;overflow:hidden;letter-spacing:-0.516px;">D1B5B09F</div>
<div class="t" style="left:356px;top:219px;width:52px;overflow:hidden;letter-spacing:-0.160px;">Star</div>
<div class="t" style="left:413px;top:219px;width:60px;overflow:hidden;letter-spacing:-0.119px;">Jolly</div>
<div class="t" style="left:478px;top:219px;width:57px;overflow:hidden;letter-spacing:-0.141px;">1: Justified</div>
<div class="t" style="left:540px;top:219px;width:37px;overflow:hidden;letter-spacing:-0.600px;">31</div>
<div class="t" style="left:582px;top:219px;width:42px;overflow:hidden;letter-spacing:-0.600px;">31</div>
<div class="t" style="left:629px;top:219px;width:43px;overflow:hidden;letter-spacing:-0.600px;">31</div>
<div class="t" style="left:677px;top:219px;width:43px;overflow:hidden;letter-spacing:-0.600px;">1</div>
<div class="t" style="left:725px;top:219px;width:44px;overflow:hidden;letter-spacing:-0.600px;">31</div>
<div class="t" style="left:774px;top:219px;width:42px;overflow:hidden;letter-spacing:-0.600px;">31</div>
<div class="t" style="left:821px;top:219px;width:61px;overflow:hidden;letter-spacing:-0.180px;">Dark</div>
<div class="t" style="left:887px;top:219px;width:57px;overflow:hidden;letter-spacing:-0.600px;">59</div>
<div class="t" style="left:949px;top:219px;width:63px;overflow:hidden;letter-spacing:-0.120px;">-</div>
<div class="t" style="left:1017px;top:219px;width:117px;overflow:hidden;letter-spacing:-0.122px;">Somewhat vain</div>
<div class="t" style="left:1139px;top:219px;width:105px;overflow:hidden;letter-spacing:-0.424px;">2026-11-22 07:43:06</div>
<div class="t" style="left:1249px;top:219px;width:61px;overflow:hidden;letter-spacing:-0.378px;">1104</div>
<div class="t" style="left:1315px;top:219px;width:96px;overflow:hidden;letter-spacing:-0.125px;">L + Start + Left</div>
<div class="a" style="left:0px;top:239px;width:1413px;height:1px;background:#1b1b1b"></div>
<div class="t" style="left:3px;top:249px;width:110px;overflow:hidden;letter-spacing:-0.571px;">072706259BD3B467</div>
<div class="t" style="left:118px;top:249px;width:74px;overflow:hidden;letter-spacing:-0.600px;">531</div>
<div class="t" style="left:197px;top:249px;width:89px;overflow:hidden;letter-spacing:-0.600px;">0</div>
<div class="t" style="left:291px;top:249px;width:60px;overflow:hidden;letter-spacing:-0.542px;">B50BD427</div>
<div class="t" style="left:356px;top:249px;width:52px;overflow:hidden;letter-spacing:-0.149px;">Square</div>
<div class="t" style="left:413px;top:249px;width:60px;overflow:hidden;letter-spacing:-0.119px;">Jolly</div>
<div class="t" style="left:478px;top:249px;width:57px;overflow:hidden;letter-spacing:-0.141px;">1: Justified</div>
<div class="t" style="left:540px;top:249px;width:37px;overflow:hidden;letter-spacing:-0.600px;">31</div>
<div class="t" style="left:582px;top:249px;width:42px;overflow:hidden;letter-spacing:-0.600px;">31</div>
<div class="t" style="left:629px;top:249px;width:43px;overflow:hidden;letter-spacing:-0.600px;">31</div>
<div class="t" style="left:677px;top:249px;width:43px;overflow:hidden;letter-spacing:-0.600px;">26</div>
<div class="t" style="left:725px;top:249px;width:44px;overflow:hidden;letter-spacing:-0.600px;">31</div>
<div class="t" style="left:774px;top:249px;width:42px;overflow:hidden;letter-spacing:-0.600px;">31</div>
<div class="t" style="left:821px;top:249px;width:61px;overflow:hidden;letter-spacing:-0.113px;">Electric</div>
<div class="t" style="left:887px;top:249px;width:57px;overflow:hidden;letter-spacing:-0.600px;">70</div>
<div class="t" style="left:949px;top:249px;width:63px;overflow:hidden;letter-spacing:-0.120px;">-</div>
<div class="t" style="left:1017px;top:249px;width:117px;overflow:hidden;letter-spacing:-0.122px;">Somewhat vain</div>
<div class="t" style="left:1139px;top:249px;width:105px;overflow:hidden;letter-spacing:-0.471px;">2026-06-04 03:30:10</div>
<div class="t" style="left:1249px;top:249px;width:61px;overflow:hidden;letter-spacing:-0.378px;">1104</div>
<div class="t" style="left:1315px;top:249px;width:96px;overflow:hidden;letter-spacing:-0.468px;">R</div>
<div class="a" style="left:0px;top:269px;width:1413px;height:1px;background:#1b1b1b"></div>
<div class="t" style="left:3px;top:279px;width:110px;overflow:hidden;letter-spacing:-0.571px;">072706259BD3B467</div>
<div class="t" style="left:118px;top:279px;width:74px;overflow:hidden;letter-spacing:-0.600px;">532</div>
<div class="t" style="left:197px;top:279px;width:89px;overflow:hidden;letter-spacing:-0.600px;">0</div>
<div class="t" style="left:291px;top:279px;width:60px;overflow:hidden;letter-spacing:-0.542px;">B50BD427</div>
<div class="t" style="left:356px;top:279px;width:52px;overflow:hidden;letter-spacing:-0.149px;">Square</div>
<div class="t" style="left:413px;top:279px;width:60px;overflow:hidden;letter-spacing:-0.119px;">Jolly</div>
<div class="t" style="left:478px;top:279px;width:57px;overflow:hidden;letter-spacing:-0.141px;">1: Justified</div>
<div class="t" style="left:540px;top:279px;width:37px;overflow:hidden;letter-spacing:-0.600px;">31</div>
<div class="t" style="left:582px;top:279px;width:42px;overflow:hidden;letter-spacing:-0.600px;">31</div>
<div class="t" style="left:629px;top:279px;width:43px;overflow:hidden;letter-spacing:-0.600px;">31</div>
<div class="t" style="left:677px;top:279px;width:43px;overflow:hidden;letter-spacing:-0.600px;">26</div>
<div class="t" style="left:725px;top:279px;width:44px;overflow:hidden;letter-spacing:-0.600px;">31</div>
<div class="t" style="left:774px;top:279px;width:42px;overflow:hidden;letter-spacing:-0.600px;">31</div>
<div class="t" style="left:821px;top:279px;width:61px;overflow:hidden;letter-spacing:-0.113px;">Electric</div>
<div class="t" style="left:887px;top:279px;width:57px;overflow:hidden;letter-spacing:-0.600px;">70</div>
<div class="t" style="left:949px;top:279px;width:63px;overflow:hidden;letter-spacing:-0.120px;">-</div>
<div class="t" style="left:1017px;top:279px;width:117px;overflow:hidden;letter-spacing:-0.122px;">Somewhat vain</div>
<div class="t" style="left:1139px;top:279px;width:105px;overflow:hidden;letter-spacing:-0.471px;">2026-06-04 03:30:10</div>
<div class="t" style="left:1249px;top:279px;width:61px;overflow:hidden;letter-spacing:-0.378px;">1104</div>
<div class="t" style="left:1315px;top:279px;width:96px;overflow:hidden;letter-spacing:-0.468px;">R</div>
<div class="a" style="left:0px;top:299px;width:1413px;height:1px;background:#1b1b1b"></div>
<div class="a" style="left:114px;top:0px;width:1px;height:292px;background:#1b1b1b"></div>
<div class="a" style="left:193px;top:0px;width:1px;height:292px;background:#1b1b1b"></div>
<div class="a" style="left:287px;top:0px;width:1px;height:292px;background:#1b1b1b"></div>
<div class="a" style="left:352px;top:0px;width:1px;height:292px;background:#1b1b1b"></div>
<div class="a" style="left:409px;top:0px;width:1px;height:292px;background:#1b1b1b"></div>
<div class="a" style="left:474px;top:0px;width:1px;height:292px;background:#1b1b1b"></div>
<div class="a" style="left:536px;top:0px;width:1px;height:292px;background:#1b1b1b"></div>
<div class="a" style="left:578px;top:0px;width:1px;height:292px;background:#1b1b1b"></div>
<div class="a" style="left:625px;top:0px;width:1px;height:292px;background:#1b1b1b"></div>
<div class="a" style="left:673px;top:0px;width:1px;height:292px;background:#1b1b1b"></div>
<div class="a" style="left:721px;top:0px;width:1px;height:292px;background:#1b1b1b"></div>
<div class="a" style="left:770px;top:0px;width:1px;height:292px;background:#1b1b1b"></div>
<div class="a" style="left:817px;top:0px;width:1px;height:292px;background:#1b1b1b"></div>
<div class="a" style="left:883px;top:0px;width:1px;height:292px;background:#1b1b1b"></div>
<div class="a" style="left:945px;top:0px;width:1px;height:292px;background:#1b1b1b"></div>
<div class="a" style="left:1013px;top:0px;width:1px;height:292px;background:#1b1b1b"></div>
<div class="a" style="left:1135px;top:0px;width:1px;height:292px;background:#1b1b1b"></div>
<div class="a" style="left:1245px;top:0px;width:1px;height:292px;background:#1b1b1b"></div>
<div class="a" style="left:1311px;top:0px;width:1px;height:292px;background:#1b1b1b"></div>
<div class="a" style="left:1412px;top:0px;width:1px;height:292px;background:#1b1b1b"></div>
</div>
<div class="a" style="left:1563px;top:525px;width:1px;height:312px;background:#161616"></div>
<div class="a" style="left:1564px;top:525px;width:13px;height:14px;background:#4d4d4d;border-left:1px solid #666;border-bottom:1px solid #666;box-sizing:border-box"></div>
<div class="a" style="left:1564px;top:539px;width:13px;height:1px;background:#161616"></div>
<svg class="a" style="left:1567px;top:529px" width="8" height="5"><polygon points="0.2,4.7 7.8,4.7 4,0.4" fill="#cfcfcf"/></svg>
<div class="a" style="left:1564px;top:540px;width:13px;height:181px;background:#4f4f4f;border-left:1px solid #676767;border-bottom:1px solid #676767;box-sizing:border-box"></div>
<div class="a" style="left:1564px;top:721px;width:13px;height:1px;background:#161616"></div>
<div class="a" style="left:1564px;top:722px;width:13px;height:100px;background:#474747;border-left:1px solid #4d4d4d;box-sizing:border-box"></div>
<div class="a" style="left:1564px;top:822px;width:13px;height:1px;background:#161616"></div>
<div class="a" style="left:1564px;top:823px;width:13px;height:14px;background:#4d4d4d;border-left:1px solid #666;border-top:1px solid #666;box-sizing:border-box"></div>
<svg class="a" style="left:1567px;top:828px" width="8" height="5"><polygon points="0.2,0.3 7.8,0.3 4,4.6" fill="#cfcfcf"/></svg>
<div class="a" style="left:16px;top:598px;width:1426px;height:43px;border:7px solid #ff0000;box-sizing:border-box"></div>
</body></html>
